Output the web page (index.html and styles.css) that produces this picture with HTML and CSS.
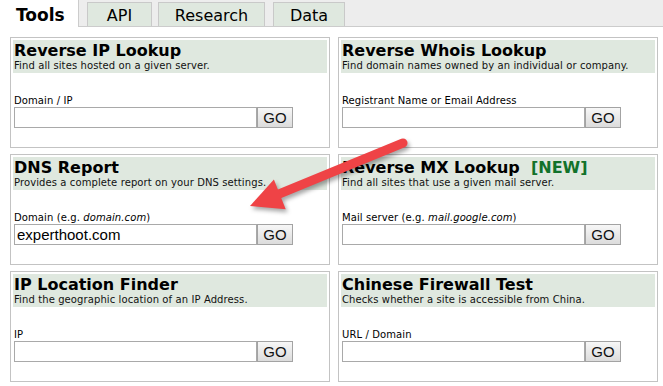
FILE: index.html
```html
<!DOCTYPE html>
<html>
<head>
<meta charset="utf-8">
<link rel="stylesheet" href="styles.css">
</head>
<body>
<div class="page">
  <div class="tabbar">
    <div class="tab active">Tools</div>
    <div class="tabs-rest">
      <div class="tab t-api">API</div>
      <div class="tab t-research">Research</div>
      <div class="tab t-data">Data</div>
    </div>
  </div>
  <div class="grid">
    <div class="panel">
      <div class="phead">
        <div class="ptitle">Reverse IP Lookup</div>
        <div class="pdesc">Find all sites hosted on a given server.</div>
      </div>
      <div class="label">Domain / IP</div>
      <div class="row"><input class="field" type="text"><button class="go">GO</button></div>
    </div>
    <div class="panel">
      <div class="phead">
        <div class="ptitle">Reverse Whois Lookup</div>
        <div class="pdesc">Find domain names owned by an individual or company.</div>
      </div>
      <div class="label">Registrant Name or Email Address</div>
      <div class="row"><input class="field" type="text"><button class="go">GO</button></div>
    </div>
    <div class="panel">
      <div class="phead">
        <div class="ptitle">DNS Report</div>
        <div class="pdesc">Provides a complete report on your DNS settings.</div>
      </div>
      <div class="label">Domain (e.g. <i>domain.com</i>)</div>
      <div class="row"><input class="field" type="text" value="experthoot.com"><button class="go">GO</button></div>
    </div>
    <div class="panel">
      <div class="phead">
        <div class="ptitle">Reverse MX Lookup&nbsp;&nbsp;<span class="new">[NEW]</span></div>
        <div class="pdesc">Find all sites that use a given mail server.</div>
      </div>
      <div class="label">Mail server (e.g. <i>mail.google.com</i>)</div>
      <div class="row"><input class="field" type="text"><button class="go">GO</button></div>
    </div>
    <div class="panel">
      <div class="phead">
        <div class="ptitle">IP Location Finder</div>
        <div class="pdesc">Find the geographic location of an IP Address.</div>
      </div>
      <div class="label">IP</div>
      <div class="row"><input class="field" type="text"><button class="go">GO</button></div>
    </div>
    <div class="panel">
      <div class="phead">
        <div class="ptitle">Chinese Firewall Test</div>
        <div class="pdesc">Checks whether a site is accessible from China.</div>
      </div>
      <div class="label">URL / Domain</div>
      <div class="row"><input class="field" type="text"><button class="go">GO</button></div>
    </div>
  </div>
  <svg class="arrow" width="663" height="386" viewBox="0 0 663 386">
    <g class="arrow-g">
      <line x1="403" y1="143" x2="279" y2="194" stroke="#ef4346" stroke-width="9" stroke-linecap="round"/>
      <polygon points="250,206 273.9,179.4 285.7,209.2" fill="#ef4346"/>
    </g>
  </svg>
</div>
</body>
</html>
```
FILE: styles.css
```css
html, body {
  margin: 0;
  padding: 0;
  background: #ffffff;
}
.page {
  position: relative;
  width: 663px;
  height: 386px;
  overflow: hidden;
  font-family: "DejaVu Sans", Verdana, sans-serif;
  color: #000;
}
.tabbar {
  display: flex;
  height: 27px;
}
.tab.active {
  width: 79px;
  height: 27px;
  box-sizing: border-box;
  border-right: 1px solid #cccccc;
  background: #fff;
  font-weight: bold;
  font-size: 17px;
  padding-left: 16px;
  line-height: 30px;
}
.tabs-rest {
  flex: 1;
  display: flex;
  align-items: flex-end;
  background: #ededed;
  border-bottom: 1px solid #cccccc;
  box-sizing: border-box;
  height: 27px;
}
.tabs-rest .tab {
  box-sizing: border-box;
  height: 24px;
  border: 1px solid #c9c9c9;
  border-bottom: none;
  background: #dfe8df;
  font-size: 16px;
  line-height: 25px;
  text-align: center;
}
.t-api { margin-left: 8px; width: 65px; }
.t-research { margin-left: 6px; width: 107px; }
.t-data { margin-left: 8px; width: 72px; }

.grid {
  display: grid;
  grid-template-columns: 320px 320px;
  grid-auto-rows: 111px;
  column-gap: 8px;
  row-gap: 6px;
  padding: 10px 0 0 10px;
}
.panel {
  border: 1px solid #c3c3c3;
  padding: 2px;
  box-sizing: border-box;
}
.phead {
  background: #dfe8df;
  height: 33px;
  box-sizing: border-box;
  padding: 2px 0 0 1px;
}
.ptitle {
  font-weight: bold;
  font-size: 16px;
  line-height: 18px;
  color: #000;
}
.new {
  color: #12722b;
}
.pdesc {
  font-size: 10px;
  line-height: 12px;
  letter-spacing: 0.1px;
  color: #111;
}
.label {
  margin-top: 22px;
  font-size: 10px;
  line-height: 12px;
  letter-spacing: 0.1px;
  padding-left: 1px;
}
.row {
  display: flex;
  padding-left: 1px;
}
.field {
  box-sizing: border-box;
  width: 243px;
  height: 21px;
  border: 1px solid #a9a9a9;
  margin: 0;
  padding: 0 2px;
  font-family: "Liberation Sans", Arial, sans-serif;
  font-size: 15px;
  color: #000;
  outline: none;
}
.go {
  box-sizing: border-box;
  width: 36px;
  height: 21px;
  margin: 0;
  padding: 0;
  border: 1px solid #a3a3a3;
  background: linear-gradient(#f7f7f7, #dcdcdc);
  font-family: "Liberation Sans", Arial, sans-serif;
  font-size: 15px;
  line-height: 19px;
  color: #111;
}
.arrow {
  position: absolute;
  left: 0;
  top: 0;
  pointer-events: none;
}
.arrow-g {
  filter: drop-shadow(2px 3px 2px rgba(0,0,0,0.35));
}
```
